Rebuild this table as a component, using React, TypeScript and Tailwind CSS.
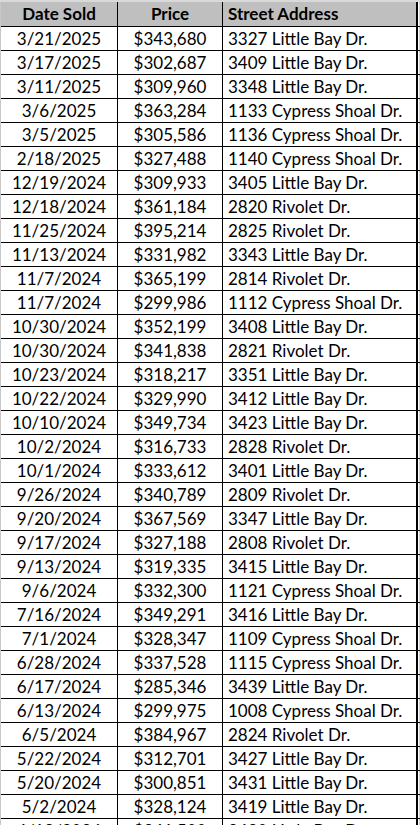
const SALES = [
  ["3/21/2025", "$343,680", "3327 Little Bay Dr."],
  ["3/17/2025", "$302,687", "3409 Little Bay Dr."],
  ["3/11/2025", "$309,960", "3348 Little Bay Dr."],
  ["3/6/2025", "$363,284", "1133 Cypress Shoal Dr."],
  ["3/5/2025", "$305,586", "1136 Cypress Shoal Dr."],
  ["2/18/2025", "$327,488", "1140 Cypress Shoal Dr."],
  ["12/19/2024", "$309,933", "3405 Little Bay Dr."],
  ["12/18/2024", "$361,184", "2820 Rivolet Dr."],
  ["11/25/2024", "$395,214", "2825 Rivolet Dr."],
  ["11/13/2024", "$331,982", "3343 Little Bay Dr."],
  ["11/7/2024", "$365,199", "2814 Rivolet Dr."],
  ["11/7/2024", "$299,986", "1112 Cypress Shoal Dr."],
  ["10/30/2024", "$352,199", "3408 Little Bay Dr."],
  ["10/30/2024", "$341,838", "2821 Rivolet Dr."],
  ["10/23/2024", "$318,217", "3351 Little Bay Dr."],
  ["10/22/2024", "$329,990", "3412 Little Bay Dr."],
  ["10/10/2024", "$349,734", "3423 Little Bay Dr."],
  ["10/2/2024", "$316,733", "2828 Rivolet Dr."],
  ["10/1/2024", "$333,612", "3401 Little Bay Dr."],
  ["9/26/2024", "$340,789", "2809 Rivolet Dr."],
  ["9/20/2024", "$367,569", "3347 Little Bay Dr."],
  ["9/17/2024", "$327,188", "2808 Rivolet Dr."],
  ["9/13/2024", "$319,335", "3415 Little Bay Dr."],
  ["9/6/2024", "$332,300", "1121 Cypress Shoal Dr."],
  ["7/16/2024", "$349,291", "3416 Little Bay Dr."],
  ["7/1/2024", "$328,347", "1109 Cypress Shoal Dr."],
  ["6/28/2024", "$337,528", "1115 Cypress Shoal Dr."],
  ["6/17/2024", "$285,346", "3439 Little Bay Dr."],
  ["6/13/2024", "$299,975", "1008 Cypress Shoal Dr."],
  ["6/5/2024", "$384,967", "2824 Rivolet Dr."],
  ["5/22/2024", "$312,701", "3427 Little Bay Dr."],
  ["5/20/2024", "$300,851", "3431 Little Bay Dr."],
  ["5/2/2024", "$328,124", "3419 Little Bay Dr."],
  ["4/18/2024", "$341,500", "3420 Little Bay Dr."],
];

const Row = ({ cells, header = false }: { cells: string[]; header?: boolean }) => (
  <div
    className={
      "flex border-b border-black " +
      (header ? "h-[25px] bg-[#bfbfbf] font-bold" : "h-[24px] bg-white")
    }
  >
    <div className="w-[117px] shrink-0 border-r border-black text-center leading-[23px]">
      {cells[0]}
    </div>
    <div className="w-[105px] shrink-0 border-r border-black text-center leading-[23px]">
      {cells[1]}
    </div>
    <div className="w-[195px] shrink-0 border-r-2 border-black pl-[5px] leading-[23px] whitespace-nowrap">
      {cells[2]}
    </div>
    <div className="w-px shrink-0 bg-white" />
    <div className="w-px shrink-0 bg-[#d4d4d4]" />
  </div>
);

export default function App() {
  return (
    <div className="h-[825px] w-[420px] overflow-hidden bg-white text-[17px] text-black font-['Lato',sans-serif]">
      <div className="h-[2px] bg-[#d9d9d9]" />
      <div className="border-l border-[#c8c8c8]">
        <Row header cells={["Date Sold", "Price", "Street Address"]} />
        {SALES.map((s, i) => (
          <Row key={i} cells={s} />
        ))}
      </div>
    </div>
  );
}
